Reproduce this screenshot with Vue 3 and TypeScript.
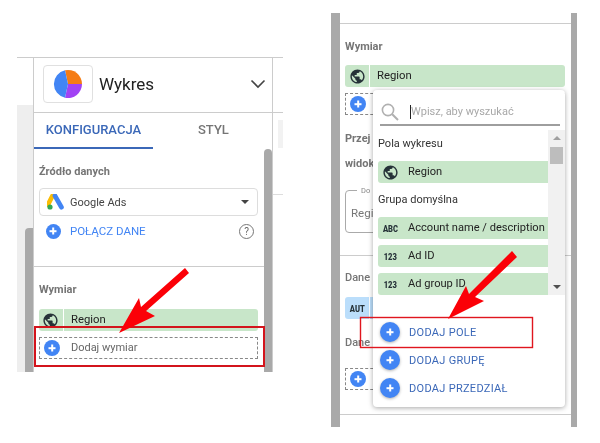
<template>
  <div class="page">
    <section class="shot shot-left">
      <div class="gutter-left"><div class="gutter-thumb"></div></div>
      <div class="panel">
        <header class="chart-header">
          <div class="chart-thumb">
            <svg width="30" height="30" viewBox="0 0 30 30">
              <path d="M15 15 L12 1.3 A14 14 0 0 1 29 15 Z" fill="#f57c14" />
              <path d="M15 15 L29 15 A14 14 0 0 1 12 28.7 Z" fill="#a142f4" />
              <path d="M15 15 L12 28.7 A14 14 0 0 1 12 1.3 Z" fill="#4285f4" />
            </svg>
          </div>
          <span class="chart-title">Wykres</span>
          <svg class="chevron" width="16" height="10" viewBox="0 0 16 10">
            <path d="M1.5 1.5 L8 8 L14.5 1.5" fill="none" stroke="#444" stroke-width="1.6" />
          </svg>
        </header>
        <nav class="tabs">
          <div class="tab active">KONFIGURACJA</div>
          <div class="tab">STYL</div>
        </nav>
        <div class="panel-body">
          <div class="panel-content">
            <div class="group">
              <div class="label first">Źródło danych</div>
              <div class="select">
                <svg width="17" height="16" viewBox="0 0 17 16">
                  <path d="M5.6 1.6 L1 10.6" stroke="#fbbc04" stroke-width="4.6" stroke-linecap="round" />
                  <path d="M8 1.8 L14.4 13.2" stroke="#4285f4" stroke-width="4.8" stroke-linecap="round" />
                  <circle cx="3" cy="13" r="2.6" fill="#34a853" />
                </svg>
                <span class="select-text">Google Ads</span>
                <span class="caret"></span>
              </div>
              <div class="connect">
                <span class="plus small"></span>
                <span class="connect-text">POŁĄCZ DANE</span>
                <span class="help">?</span>
              </div>
            </div>
            <div class="group last">
              <div class="label">Wymiar</div>
              <div class="chip">
                <span class="chip-icon"><svg class="globe" viewBox="0 0 24 24"><path :d="globePath" /></svg></span>
                <span class="chip-text">Region</span>
              </div>
              <div class="dashed">
                <span class="plus tiny"></span>
                <span class="dashed-text">Dodaj wymiar</span>
              </div>
            </div>
          </div>
          <div class="scrollbar"></div>
        </div>
      </div>
      <div class="gutter-right">
        <div class="gutter-patch"></div>
        <div class="gutter-line"></div>
      </div>
    </section>

    <section class="shot shot-right">
      <div class="side-bar"></div>
      <div class="side-content">
        <div class="group top">
          <div class="label">Wymiar</div>
          <div class="chip">
            <span class="chip-icon"><svg class="globe" viewBox="0 0 24 24"><path :d="globePath" /></svg></span>
            <span class="chip-text">Region</span>
          </div>
          <div class="dashed"><span class="plus tiny"></span></div>
          <div class="label tall">Przej<br />widok</div>
          <fieldset class="outlined">
            <legend>Do</legend>
            <span>Regi</span>
          </fieldset>
        </div>
        <div class="group metrics">
          <div class="label plain">Dane</div>
          <div class="chip blue"><span class="aut"><span class="aut-text">AUT</span></span></div>
          <div class="label plain second">Dane</div>
          <div class="dashed"><span class="plus tiny"></span></div>
        </div>
      </div>
      <div class="side-bar thin"></div>

      <div class="popup">
        <div class="search">
          <svg width="20" height="20" viewBox="0 0 20 20">
            <circle cx="8" cy="8" r="5.6" fill="none" stroke="#b0b0b0" stroke-width="1.6" />
            <path d="M12.2 12.2 L18 18" stroke="#b0b0b0" stroke-width="2" />
          </svg>
          <span class="cursor"></span>
          <span class="placeholder">Wpisz, aby wyszukać</span>
        </div>
        <div class="field-list">
          <div class="fields">
            <template v-for="row in rows" :key="row.text">
              <div v-if="row.kind === 'head'" class="field-head">{{ row.text }}</div>
              <div v-else class="field-row">
                <span class="field-icon">
                  <svg v-if="row.kind === 'geo'" class="globe" viewBox="0 0 24 24"><path :d="globePath" /></svg>
                  <span v-else class="type-tag">{{ row.kind }}</span>
                </span>
                <span class="field-text">{{ row.text }}</span>
              </div>
            </template>
          </div>
          <div class="list-scroll">
            <span class="arrow-up"></span>
            <div class="list-thumb"></div>
            <span class="arrow-down"></span>
          </div>
        </div>
        <div class="actions">
          <div v-for="action in actions" :key="action" class="action">
            <span class="plus big"></span>
            <span>{{ action }}</span>
          </div>
        </div>
      </div>
    </section>

    <svg class="marks" width="600" height="443" viewBox="0 0 600 443">
      <rect x="35" y="327" width="229" height="39" fill="none" stroke="#d3141c" stroke-width="2" />
      <rect x="360.5" y="317.5" width="172" height="30" fill="none" stroke="#e0161e" stroke-width="1.4" />
      <polygon points="185,268 189,273 146,311 155,316 119,333 139,298 141,307" fill="#fb0007" />
      <polygon points="512,251 517,257 475,297 484,301 448,319 466,286 469,294" fill="#fb0007" />
    </svg>
  </div>
</template>

<script setup lang="ts">
type Row = { kind: string; text: string }

const globePath =
  'M12 2C6.48 2 2 6.48 2 12s4.48 10 10 10 10-4.48 10-10S17.52 2 12 2zm-1 17.93c-3.95-.49-7-3.85-7-7.93 0-.62.08-1.21.21-1.79L9 15v1c0 1.1.9 2 2 2v1.93zm6.9-2.54c-.26-.81-1-1.39-1.9-1.39h-1v-3c0-.55-.45-1-1-1H8v-2h2c.55 0 1-.45 1-1V7h2c1.1 0 2-.9 2-2v-.41c2.93 1.19 5 4.06 5 7.41 0 2.08-.8 3.97-2.1 5.39z'

const rows: Row[] = [
  { kind: 'head', text: 'Pola wykresu' },
  { kind: 'geo', text: 'Region' },
  { kind: 'head', text: 'Grupa domyślna' },
  { kind: 'ABC', text: 'Account name / description' },
  { kind: '123', text: 'Ad ID' },
  { kind: '123', text: 'Ad group ID' },
]

const actions = ['DODAJ POLE', 'DODAJ GRUPĘ', 'DODAJ PRZEDZIAŁ']
</script>

<style>
html,
body {
  margin: 0;
  background: #fff;
  overflow: hidden;
}
</style>

<style scoped>
.page {
  position: relative;
  display: flex;
  align-items: flex-start;
  width: 600px;
  height: 443px;
  overflow: hidden;
  background: #fff;
  font-family: Roboto, "Liberation Sans", sans-serif;
  color: #333;
  filter: blur(0.3px);
}

.marks {
  position: absolute;
  left: 0;
  top: 0;
}

.shot {
  display: flex;
  flex: none;
}

.shot-left {
  width: 266px;
  height: 315px;
  margin: 57px 0 0 17px;
  border-top: 1px solid #ccc;
  box-sizing: border-box;
}

.gutter-left {
  display: flex;
  justify-content: flex-end;
  align-items: flex-end;
  width: 16px;
  height: 267px;
  margin-top: 47px;
  background: #eee;
}

.gutter-thumb {
  width: 8px;
  height: 144px;
  background: #a9a9a9;
  border-radius: 4px 0 0 0;
}

.panel {
  display: flex;
  flex-direction: column;
  width: 241px;
  height: 100%;
  border-left: 1px solid #ccc;
  border-right: 1px solid #ccc;
  box-sizing: border-box;
}

.chart-header {
  display: flex;
  align-items: center;
  height: 52px;
  padding: 0 6px 2px 9px;
  border-bottom: 1px solid #ccc;
}

.chart-thumb {
  display: flex;
  align-items: center;
  justify-content: center;
  width: 48px;
  height: 36px;
  border: 1px solid #e0e0e0;
  border-radius: 4px;
}

.chart-title {
  margin-left: 6px;
  font-size: 17px;
  color: #222;
}

.chevron {
  margin-left: auto;
}

.tabs {
  display: flex;
  height: 36px;
}

.tab {
  width: 119px;
  line-height: 34px;
  text-align: center;
  font-size: 13px;
  font-weight: 500;
  color: #757575;
}

.tab:last-child {
  padding-left: 2px;
  box-sizing: border-box;
}

.tab.active {
  color: #3b68b8;
  border-bottom: 2px solid #3b68b8;
}

.panel-body {
  display: flex;
  flex: 1;
  min-height: 0;
}

.panel-content {
  flex: 1;
}

.scrollbar {
  width: 8px;
  background: #a9a9a9;
  border-radius: 4px 4px 0 0;
}

.group {
  padding: 15px 6px 27px 5px;
  border-bottom: 1px solid #ccc;
}

.group.last {
  padding-top: 16px;
  border-bottom: 0;
  padding-bottom: 0;
}

.label {
  font-size: 11px;
  font-weight: 700;
  line-height: 14px;
  color: #757575;
  margin-bottom: 12px;
}

.label.first {
  margin: 1px 0 9px;
}

.select {
  display: flex;
  align-items: center;
  height: 28px;
  padding: 0 8px 0 7px;
  border: 1px solid #ddd;
  border-radius: 4px;
  box-sizing: border-box;
}

.select-text {
  margin-left: 6px;
  font-size: 11px;
  color: #444;
}

.caret {
  margin-left: auto;
  border-top: 4px solid #444;
  border-left: 4px solid transparent;
  border-right: 4px solid transparent;
}

.connect {
  display: flex;
  align-items: center;
  height: 16px;
  margin-top: 7px;
  padding-left: 7px;
}

.connect-text {
  margin-left: 9px;
  font-size: 11.5px;
  color: #4285f4;
}

.help {
  width: 13px;
  height: 13px;
  margin-left: auto;
  margin-right: 4px;
  border: 1px solid #777;
  border-radius: 50%;
  font-size: 10px;
  line-height: 13px;
  text-align: center;
  color: #666;
}

.plus {
  position: relative;
  flex: none;
  border-radius: 50%;
  background: #4285f4;
}

.plus::before,
.plus::after {
  content: "";
  position: absolute;
  left: 50%;
  top: 50%;
  background: #fff;
  transform: translate(-50%, -50%);
}

.plus::before {
  width: 7px;
  height: 1.6px;
}

.plus::after {
  width: 1.6px;
  height: 7px;
}

.plus.small {
  width: 15px;
  height: 15px;
}

.plus.tiny {
  width: 16px;
  height: 16px;
}

.plus.big {
  width: 20px;
  height: 20px;
  box-shadow: 0 1px 3px rgba(0, 0, 0, 0.3);
}

.chip {
  display: flex;
  align-items: center;
  height: 22px;
  background: #c8e6c9;
  border-radius: 3px;
}

.chip.blue {
  width: 60px;
  background: #bbdefb;
}

.chip-icon {
  display: flex;
  align-items: center;
  justify-content: center;
  width: 25px;
  height: 100%;
  border-right: 1px solid #fff;
  box-sizing: border-box;
}

.globe {
  width: 17px;
  height: 17px;
  fill: #263238;
}

.chip-text {
  margin-left: 7px;
  padding-bottom: 2px;
  font-size: 11.3px;
  color: #222;
}

.aut {
  width: 25px;
  height: 100%;
  padding-bottom: 2px;
  line-height: 20px;
  text-align: center;
  color: #263238;
  border-right: 1px solid #fff;
  box-sizing: border-box;
}

.aut-text {
  display: inline-block;
  font-size: 9.5px;
  font-weight: 900;
  transform: scaleX(0.8);
}

.dashed {
  display: flex;
  align-items: center;
  height: 22px;
  margin-top: 6px;
  padding-left: 4px;
  border: 1px dashed #888;
  box-sizing: border-box;
}

.dashed-text {
  margin-left: 11px;
  padding-bottom: 2px;
  font-size: 11px;
  color: #666;
}

.shot-right {
  position: relative;
  width: 246px;
  height: 414px;
  margin: 13px 0 0 48px;
}

.side-bar {
  width: 9px;
  background: #a9a9a9;
}

.side-bar.thin {
  width: 6px;
}

.side-content {
  width: 231px;
  padding-top: 10px;
  box-sizing: border-box;
}

.group.top {
  height: 233px;
  padding-top: 16px;
  padding-bottom: 0;
  border-top: 1px solid #ccc;
  box-sizing: border-box;
}

.group.top > .label:first-child {
  margin-bottom: 11px;
}

.label.tall {
  margin: 11px 0 16px;
  line-height: 25px;
}

.outlined {
  height: 47px;
  margin: -6px 0 0;
  padding: 0 5px;
  border: 1px solid #aaa;
  border-radius: 4px;
  box-sizing: border-box;
  font-size: 11.5px;
  color: #777;
}

.outlined legend {
  margin-left: 6px;
  padding: 0 4px;
  font-size: 7.5px;
  color: #888;
}

.outlined span {
  display: block;
  margin-top: 11px;
}

.group.metrics {
  height: 159px;
  padding-bottom: 0;
  border-bottom: 1px solid #ccc;
  box-sizing: border-box;
}

.label.plain {
  font-weight: 500;
}

.label.second {
  margin: 17px 0 18px;
}

.popup {
  position: absolute;
  left: 42px;
  top: 77px;
  display: flex;
  flex-direction: column;
  width: 192px;
  height: 317px;
  background: #fff;
  border-radius: 4px;
  box-shadow: 0 1px 5px rgba(0, 0, 0, 0.35);
}

.search {
  display: flex;
  align-items: center;
  height: 36px;
  padding-top: 9px;
  margin: 0 5px 0 7px;
  border-bottom: 2px solid #9e9e9e;
  box-sizing: border-box;
}

.cursor {
  width: 1px;
  height: 14px;
  margin-left: 10px;
  background: #222;
}

.placeholder {
  font-size: 11px;
  color: #a8a8a8;
}

.field-list {
  display: flex;
  height: 165px;
  margin-top: 4px;
}

.fields {
  width: 175px;
  padding: 3px 0 0 5px;
  box-sizing: border-box;
  overflow: hidden;
}

.field-head {
  height: 22px;
  margin-bottom: 6px;
  line-height: 22px;
  font-size: 11px;
  color: #333;
}

.field-row {
  display: flex;
  align-items: center;
  height: 22px;
  margin-bottom: 6px;
  background: #c8e6c9;
  border-radius: 3px 0 0 3px;
}

.field-icon {
  display: flex;
  align-items: center;
  justify-content: center;
  width: 24px;
  margin-top: 1px;
  margin-right: 6px;
}

.field-text {
  padding-bottom: 2px;
  font-size: 11.1px;
  color: #222;
  white-space: nowrap;
}

.type-tag {
  display: inline-block;
  font-size: 9.5px;
  font-weight: 900;
  color: #263238;
  transform: scaleX(0.8);
}

.list-scroll {
  position: relative;
  width: 17px;
  background: #f1f1f1;
}

.list-thumb {
  width: 13px;
  height: 17px;
  margin: 17px 0 0 2px;
  background: #bdbdbd;
}

.arrow-up,
.arrow-down {
  position: absolute;
  left: 5px;
  border-left: 4px solid transparent;
  border-right: 4px solid transparent;
}

.arrow-up {
  top: 6px;
  border-bottom: 4px solid #a0a0a0;
}

.arrow-down {
  bottom: 6px;
  border-top: 4px solid #505050;
}

.actions {
  margin-top: 23px;
}

.action {
  display: flex;
  align-items: center;
  height: 28px;
  padding-left: 7px;
  font-size: 11px;
  letter-spacing: 0.3px;
  color: #3b68b8;
}

.action span:last-child {
  margin-left: 9px;
}

.gutter-right {
  flex: 1;
  position: relative;
}

.gutter-right::before {
  content: "";
  display: block;
  height: 54px;
  border-bottom: 1px solid #ccc;
}

.gutter-patch {
  width: 5px;
  height: 28px;
  margin: 7px 0 0 5px;
  background: #f2f2f2;
}

.gutter-line {
  height: 1px;
  margin-top: 46px;
  background: #ddd;
}
</style>
